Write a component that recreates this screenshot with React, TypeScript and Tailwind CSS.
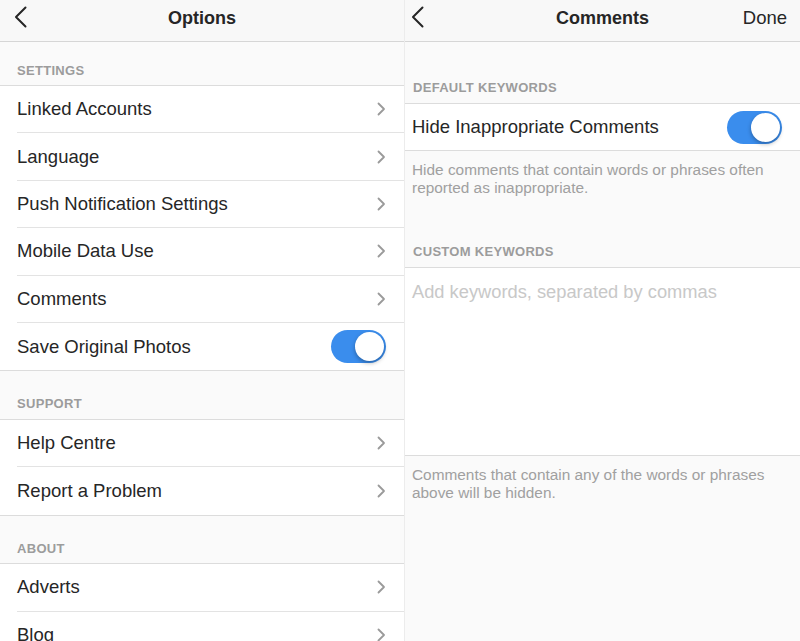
import React from 'react';

const font = { fontFamily: '"Liberation Sans", Arial, sans-serif' };

const Chevron = () => (
  <svg width="9" height="14" viewBox="0 0 9 14" className="shrink-0">
    <path d="M1.5 1.5 L7 7 L1.5 12.5" fill="none" stroke="#9a9a9a" strokeWidth="1.8" strokeLinecap="round" strokeLinejoin="round" />
  </svg>
);

const BackArrow = () => (
  <svg width="14" height="22" viewBox="0 0 14 22">
    <path d="M11.5 1.5 L2 11 L11.5 20.5" fill="none" stroke="#262626" strokeWidth="2" strokeLinecap="round" strokeLinejoin="round" />
  </svg>
);

const Toggle = () => (
  <div className="w-[55px] h-[33px] rounded-full bg-[#3a8ded] relative shrink-0">
    <div className="absolute right-[2px] top-[2px] w-[29px] h-[29px] rounded-full bg-white shadow-[0_2px_4px_rgba(0,0,0,0.3)]" />
  </div>
);

const SectionHeader = ({ label, h }: { label: string; h: string }) => (
  <div className={`${h} flex items-end px-[17px] pb-[5px] text-[13px] font-semibold tracking-[0.3px] text-[#9c9c9c]`}>
    {label}
  </div>
);

type Item = { label: string; toggle?: boolean };

const Group = ({ items }: { items: Item[] }) => (
  <div className="bg-white border-y border-[#dcdcdc]">
    {items.map((item, i) => (
      <div key={item.label} className="pl-[17px] h-[47.4px]">
        <div
          className={`h-full flex items-center justify-between pr-[18px] ${
            i < items.length - 1 ? 'border-b border-[#e3e3e3]' : ''
          }`}
        >
          <span className="text-[18.5px] text-[#262626]">{item.label}</span>
          {item.toggle ? <Toggle /> : <Chevron />}
        </div>
      </div>
    ))}
  </div>
);

const OptionsPanel = () => (
  <div className="w-[405px] shrink-0 h-full bg-[#fafafa] border-r border-[#ececec] overflow-hidden">
    <div className="h-[42px] flex items-center pb-[5px] relative bg-[#f8f8f8] border-b border-[#d6d6d6]">
      <div className="absolute left-[14px] top-[6px]">
        <BackArrow />
      </div>
      <div className="flex-1 text-center text-[18px] font-semibold text-[#262626]">Options</div>
    </div>
    <SectionHeader label="SETTINGS" h="h-[43px]" />
    <Group
      items={[
        { label: 'Linked Accounts' },
        { label: 'Language' },
        { label: 'Push Notification Settings' },
        { label: 'Mobile Data Use' },
        { label: 'Comments' },
        { label: 'Save Original Photos', toggle: true },
      ]}
    />
    <SectionHeader label="SUPPORT" h="h-[47.5px]" />
    <Group items={[{ label: 'Help Centre' }, { label: 'Report a Problem' }]} />
    <SectionHeader label="ABOUT" h="h-[47.5px]" />
    <Group items={[{ label: 'Adverts' }, { label: 'Blog' }]} />
  </div>
);

const CommentsPanel = () => (
  <div className="flex-1 h-full bg-[#fafafa] overflow-hidden">
    <div className="h-[42px] flex items-center pb-[5px] relative bg-[#f8f8f8] border-b border-[#d6d6d6]">
      <div className="absolute left-[6px] top-[6px]">
        <BackArrow />
      </div>
      <div className="flex-1 text-center text-[18px] font-semibold text-[#262626]">Comments</div>
      <div className="absolute right-[13px] top-[4px] text-[18.5px] text-[#262626]">Done</div>
    </div>
    <div className="h-[61px] flex items-end px-[8px] pb-[6px] text-[13px] font-semibold tracking-[0.3px] text-[#9c9c9c]">
      DEFAULT KEYWORDS
    </div>
    <div className="h-[48px] bg-white border-y border-[#dcdcdc] flex items-center justify-between pl-[7px] pr-[18px]">
      <span className="text-[18.5px] text-[#262626]">Hide Inappropriate Comments</span>
      <Toggle />
    </div>
    <div className="px-[7px] pt-[10px] text-[15.4px] leading-[18px] text-[#a0a0a0]">
      Hide comments that contain words or phrases often
      <br />
      reported as inappropriate.
    </div>
    <div className="h-[70px] flex items-end px-[8px] pb-[6px] text-[13px] font-semibold tracking-[0.3px] text-[#9c9c9c]">
      CUSTOM KEYWORDS
    </div>
    <div className="h-[189px] bg-white border-y border-[#dcdcdc] px-[7px] pt-[10px]">
      <div className="text-[18.3px] text-[#c8c8c8]">Add keywords, separated by commas</div>
    </div>
    <div className="px-[7px] pt-[10px] text-[15.4px] leading-[18px] text-[#a0a0a0]">
      Comments that contain any of the words or phrases
      <br />
      above will be hidden.
    </div>
  </div>
);

export default function App() {
  return (
    <div className="w-[800px] h-[641px] flex overflow-hidden" style={font}>
      <OptionsPanel />
      <CommentsPanel />
    </div>
  );
}
